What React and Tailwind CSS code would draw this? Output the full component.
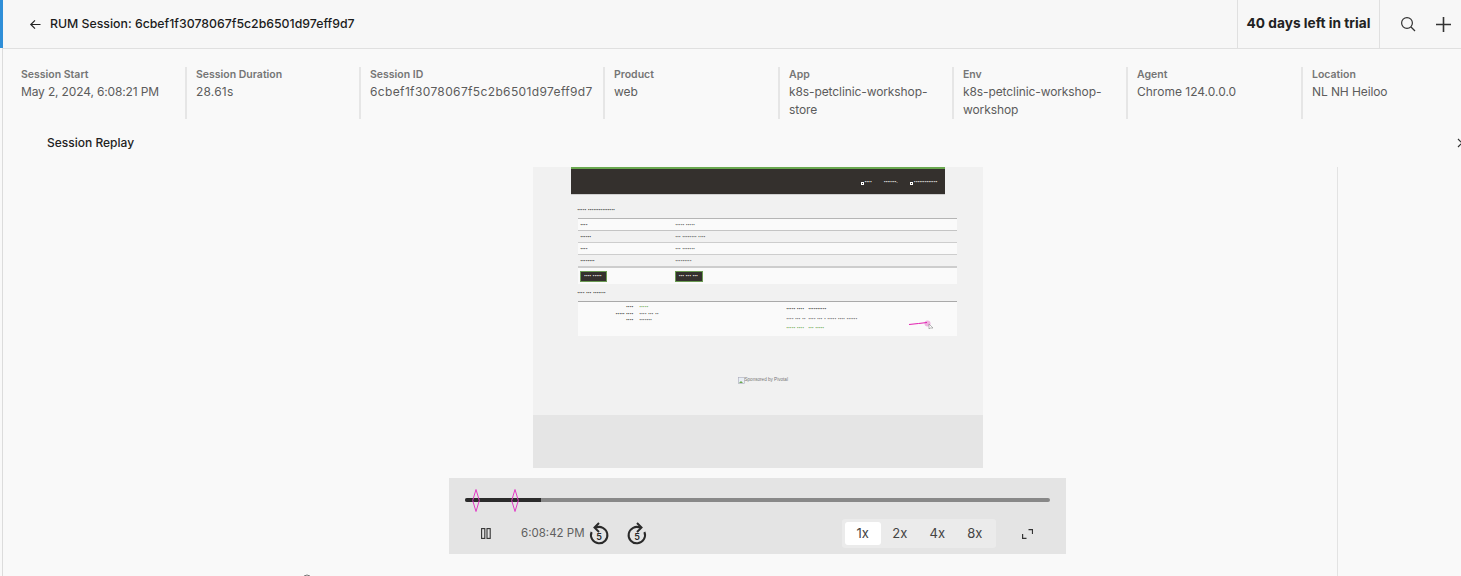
import React from "react";

const meta = [
  ["Session Start", "May 2, 2024, 6:08:21 PM", "w-[182px] pl-[18px]", "tracking-[-0.15px]"],
  ["Session Duration", "28.61s", "w-[174px] border-l-2 border-[#e6e6e6] pl-[9px]", "tracking-[0.2px]"],
  ["Session ID", "6cbef1f3078067f5c2b6501d97eff9d7", "w-[244px] border-l-2 border-[#e6e6e6] pl-[9px]", "tracking-[0.36px]"],
  ["Product", "web", "w-[175px] border-l-2 border-[#e6e6e6] pl-[9px]", ""],
  ["App", "k8s-petclinic-workshop-store", "w-[174px] border-l-2 border-[#e6e6e6] pl-[9px]", "tracking-[-0.1px]"],
  ["Env", "k8s-petclinic-workshop-workshop", "w-[174px] border-l-2 border-[#e6e6e6] pl-[9px]", "tracking-[-0.1px]"],
  ["Agent", "Chrome 124.0.0.0", "w-[175px] border-l-2 border-[#e6e6e6] pl-[9px]", ""],
  ["Location", "NL NH Heiloo", "w-[150px] border-l-2 border-[#e6e6e6] pl-[9px]", "tracking-[-0.1px]"],
];

const Dots = ({ n, className = "" }) => (
  <span className={`inline-block font-['Liberation_Sans',sans-serif] text-[4px] leading-none font-bold tracking-[0.4px] whitespace-nowrap ${className}`}>{n}</span>
);

const Row = ({ a, b, bg, border }) => (
  <div className={`flex h-[12px] items-center border-t ${border} ${bg}`}>
    <div className="w-[98px] pl-[3px] text-[#333]"><Dots n={a} /></div>
    <div className="text-[#555]"><Dots n={b} /></div>
  </div>
);

const Btn = ({ t, w }) => (
  <div className={`flex h-[11px] items-center justify-center border border-[#6a9a52] bg-[#34302d] text-white ${w}`}>
    <Dots n={t} className="tracking-[0.2px]" />
  </div>
);

function ReplayPage() {
  return (
    <div className="relative flex h-[248px] w-[450px] flex-col bg-[#f1f1f1] text-[4px] leading-none">
      <div className="ml-[38px] flex h-[28px] w-[374px] items-center justify-end gap-[12px] border-t-2 border-b border-t-[#6aa84f] border-b-[#cfcfcf] bg-[#34302d] pr-[7px] text-white">
        <span className="flex items-center gap-[1px]"><i className="mt-[3px] h-[3px] w-[3px] border-[0.5px] border-white" /><Dots n="••••" /></span>
        <span className="flex items-center"><Dots n="•••••••." /></span>
        <span className="flex items-center gap-[1px]"><i className="mt-[3px] h-[3px] w-[3px] border-[0.5px] border-white" /><Dots n="•••••••••••••" /></span>
      </div>
      <div className="ml-[45px] flex w-[379px] flex-col">
        <div className="flex h-[23px] items-end pb-[6px] text-[#333]"><Dots n="••••• •••••••••••••••" /></div>
        <Row a="••••" b="••••• •••••" bg="bg-[#fafafa]" border="border-[#b5b5b5]" />
        <Row a="••••••" b="••• •••••••• ••••" bg="bg-[#f1f1f1]" border="border-[#c4c4c4]" />
        <Row a="••••" b="••• •••••••" bg="bg-[#fafafa]" border="border-[#cdcdcd]" />
        <Row a="••••••••" b="•••••••••" bg="bg-[#f1f1f1]" border="border-[#cdcdcd]" />
        <div className="flex h-[18px] items-center gap-[68px] border-t-2 border-[#cdcdcd] bg-[#fafafa] pl-[2px]">
          <Btn t="•••• •••••" w="w-[27px]" />
          <Btn t="••• ••• •••" w="w-[28px]" />
        </div>
        <div className="flex h-[17px] items-end pb-[6px] text-[#333]"><Dots n="•••• ••• •••••••" /></div>
        <div className="flex h-[35px] border-t border-[#a9a9a9] bg-[#fafafa]">
          <div className="flex w-[209px] flex-col pt-[2px]">
            <div className="flex h-[6px] items-center gap-[6px]"><span className="w-[56px] text-right text-[#333]"><Dots n="••••" /></span><span className="text-[#6aa84f]"><Dots n="•••••" /></span></div>
            <div className="flex h-[7px] items-center gap-[6px]"><span className="w-[56px] text-right text-[#333]"><Dots n="••••• ••••" /></span><span className="text-[#555]"><Dots n="•••• ••• ••" /></span></div>
            <div className="flex h-[6px] items-center gap-[6px]"><span className="w-[56px] text-right text-[#333]"><Dots n="••••" /></span><span className="text-[#555]"><Dots n="•••••••" /></span></div>
          </div>
          <div className="flex flex-col pt-[2px]">
            <div className="flex h-[10px] items-center gap-[4px] text-[#333]"><span className="w-[18px]"><Dots n="••••• ••••" /></span><Dots n="••••••••••" /></div>
            <div className="flex h-[9px] items-center gap-[4px] text-[#666]"><span className="w-[18px]"><Dots n="•••• ••• ••" /></span><Dots n="•••• ••• • ••••• •••• ••••••" /></div>
            <div className="flex h-[9px] items-center gap-[4px] text-[#6aa84f]"><span className="w-[18px]"><Dots n="••••• ••••" /></span><Dots n="••• •••••" /></div>
          </div>
        </div>
      </div>
      <div className="mt-[37px] flex h-[14px] items-center pl-[205px]">
        <svg width="7" height="7" viewBox="0 0 7 7" className="shrink-0">
          <rect x=".5" y=".5" width="6" height="6" fill="#e8eef5" stroke="#aab" strokeWidth=".6" />
          <path d="M1 6l2-2 2 2z" fill="#6aa84f" />
        </svg>
        <span className="font-['Liberation_Sans',sans-serif] text-[4.6px] leading-none whitespace-nowrap text-[#777]">Sponsored by Pivotal</span>
      </div>
      <svg className="absolute top-[150px] left-[374px]" width="30" height="16" viewBox="0 0 30 16" fill="none">
        <circle cx="20.5" cy="6.5" r="3" fill="#eeb3e0" />
        <path d="M2 7.5 Q12 6.5 20 5.5" stroke="#e31fb0" strokeWidth="1" />
        <path d="M22 7v5l1-1h3z" fill="#fff" stroke="#888" strokeWidth=".6" />
      </svg>
    </div>
  );
}

const Diamond = ({ className }) => (
  <svg className={`absolute top-[11px] ${className}`} width="8" height="23" viewBox="0 0 8 23" fill="none">
    <path d="M4 .5 7.3 11.5 4 22.5 .7 11.5z" stroke="#e23bc5" strokeWidth="1" />
  </svg>
);

const Skip = ({ flip }) => (
  <div className="relative flex h-[24px] w-[24px] items-center justify-center text-[#2a2a2a]">
    <svg width="22" height="24" viewBox="0 0 22 24" fill="none" stroke="currentColor" strokeWidth="2" className={flip ? "-scale-x-100" : ""}>
      <path d="M7.5 5.8A8.2 8.2 0 1 1 3.6 10" />
      <path d="M11 1 6.5 5.6 11 10" />
    </svg>
    <span className="absolute top-[9px] left-0 w-full text-center text-[9px] leading-[11px] font-semibold">5</span>
  </div>
);

export default function App() {
  return (
    <div className="flex h-[576px] w-[1461px] overflow-hidden bg-[#f9f9f9] font-['Inter','Liberation_Sans',sans-serif] opacity-[.999]">
      <div className="flex w-[3px] shrink-0 flex-col">
        <div className="h-[48px] bg-[#2f8fd8]" />
        <div className="flex-1 border-r border-[#dcdcdc] bg-[#f9f9f9]" />
      </div>
      <div className="flex min-w-0 flex-1 flex-col">
        <header className="flex h-[49px] shrink-0 items-center border-b border-[#e0e0e0] bg-[#f7f7f7]">
          <div className="flex flex-1 items-center pl-[26px]">
            <svg width="13" height="13" viewBox="0 0 13 13" fill="none" stroke="#222" strokeWidth="1.2">
              <path d="M11.5 6.5H1.8M6 2.4 1.8 6.5 6 10.6" />
            </svg>
            <span className="ml-[8px] text-[12.3px] font-medium text-[#1c1c1c]">RUM Session: 6cbef1f3078067f5c2b6501d97eff9d7</span>
          </div>
          <div className="flex h-full w-[143px] items-center justify-center border-x border-[#e0e0e0] pb-[2px] text-[13.7px] font-bold text-[#222]">
            40 days left in trial
          </div>
          <div className="flex w-[81px] items-center pl-[20px] text-[#333]">
            <svg width="16" height="16" viewBox="0 0 16 16" fill="none" stroke="#333" strokeWidth="1.2">
              <circle cx="7" cy="7" r="5.4" />
              <path d="m11 11 4 4" />
            </svg>
            <svg className="ml-[19px]" width="17" height="17" viewBox="0 0 17 17" fill="none" stroke="#333" strokeWidth="1.6">
              <path d="M8.5 1v15M1 8.5h15" />
            </svg>
          </div>
        </header>

        <div className="mt-[18px] flex h-[52px] shrink-0">
          {meta.map(([k, v, w, t]) => (
            <div key={k} className={`${w} shrink-0 pt-[1px]`}>
              <div className="text-[10.5px] leading-[14px] font-semibold text-[#757575]">{k}</div>
              <div className={`mt-[1px] pr-[10px] text-[12px] leading-[18px] text-[#5c5c5c] ${t}`}>{v}</div>
            </div>
          ))}
        </div>

        <div className="flex h-[48px] shrink-0 items-center justify-between pl-[44px]">
          <span className="text-[12px] font-medium text-[#222]">Session Replay</span>
          <svg className="translate-x-[6px]" width="10" height="10" viewBox="0 0 10 10" fill="none" stroke="#333" strokeWidth="1.2">
            <path d="m1 1 8 8M9 1 1 9" />
          </svg>
        </div>

        <div className="relative flex min-h-0 flex-1 overflow-hidden">
          <div className="flex w-[1335px] shrink-0 flex-col items-center border-r border-[#e3e3e3] pl-[175px]">
            <div className="flex h-[301px] w-[450px] flex-col bg-[#e5e5e5]">
              <ReplayPage />
            </div>
            <div className="relative mt-[10px] flex h-[76px] w-[617px] flex-col bg-[#e4e4e4] px-[16px]">
              <div className="mt-[20px] flex h-[4px] w-[585px] overflow-hidden rounded-full bg-[#888]">
                <div className="h-full w-[76px] bg-[#2b2b2b]" />
              </div>
              <Diamond className="left-[23px]" />
              <Diamond className="left-[62px]" />
              <div className="mt-[17px] flex h-[29px] items-center">
                <svg className="ml-[16px]" width="10" height="11" viewBox="0 0 10 11" fill="none" stroke="#333" strokeWidth="1.1">
                  <rect x=".6" y=".6" width="3.2" height="9.8" />
                  <rect x="6" y=".6" width="3.2" height="9.8" />
                </svg>
                <span className="ml-[30px] w-[62px] text-[11.5px] whitespace-nowrap text-[#5f5f5f]">6:08:42 PM</span>
                <div className="ml-[4px]"><Skip /></div>
                <div className="ml-[14px]"><Skip flip /></div>
                <div className="ml-[193px] flex h-[29px] w-[154px] items-center gap-[1px] rounded-[3px] bg-[#ebebeb] px-[3px] text-[13px] text-[#444]">
                  <div className="flex h-[23px] w-[36px] items-center justify-center rounded-[3px] bg-white">1x</div>
                  <div className="flex h-[23px] w-[37px] items-center justify-center">2x</div>
                  <div className="flex h-[23px] w-[37px] items-center justify-center">4x</div>
                  <div className="flex h-[23px] w-[37px] items-center justify-center">8x</div>
                </div>
                <svg className="ml-[26px]" width="11" height="10" viewBox="0 0 11 10" fill="none" stroke="#333" strokeWidth="1.2">
                  <path d="M.6 5v4.4H4.5M6.5.6h4V5" />
                </svg>
              </div>
            </div>
            <svg className="absolute top-[407px] left-[298px]" width="12" height="4" viewBox="0 0 12 4" fill="none" stroke="#777">
              <circle cx="6" cy="5" r="4" />
            </svg>
          </div>
        </div>
      </div>
    </div>
  );
}
